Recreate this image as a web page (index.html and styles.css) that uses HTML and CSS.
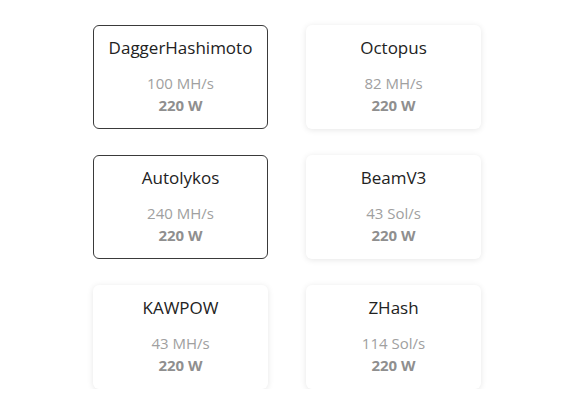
FILE: index.html
```html
<!DOCTYPE html>
<html>
<head>
<meta charset="utf-8">
<link rel="stylesheet" href="styles.css">
</head>
<body>
<div class="grid">
  <div class="card selected">
    <div class="name">DaggerHashimoto</div>
    <div class="rate">100 MH/s</div>
    <div class="power">220 W</div>
  </div>
  <div class="card">
    <div class="name">Octopus</div>
    <div class="rate">82 MH/s</div>
    <div class="power">220 W</div>
  </div>
  <div class="card selected">
    <div class="name">Autolykos</div>
    <div class="rate">240 MH/s</div>
    <div class="power">220 W</div>
  </div>
  <div class="card">
    <div class="name">BeamV3</div>
    <div class="rate">43 Sol/s</div>
    <div class="power">220 W</div>
  </div>
  <div class="card">
    <div class="name">KAWPOW</div>
    <div class="rate">43 MH/s</div>
    <div class="power">220 W</div>
  </div>
  <div class="card">
    <div class="name">ZHash</div>
    <div class="rate">114 Sol/s</div>
    <div class="power">220 W</div>
  </div>
</div>
</body>
</html>
```

FILE: styles.css
```css
html, body {
  margin: 0;
  padding: 0;
  background: #fff;
}
body {
  font-family: "Open Sans", "Noto Sans", sans-serif;
}
.grid {
  display: grid;
  grid-template-columns: 175px 175px;
  grid-auto-rows: 104px;
  column-gap: 38px;
  row-gap: 26px;
  padding: 25px 0 0 93px;
}
.card {
  box-sizing: border-box;
  border-radius: 6px;
  background: #fff;
  border: 1px solid transparent;
  box-shadow: 0 1px 6px rgba(0, 0, 0, 0.1);
  display: flex;
  flex-direction: column;
  align-items: center;
  padding-top: 10px;
}
.card.selected {
  border-color: #3a3a3a;
  box-shadow: none;
}
.name {
  font-size: 17px;
  color: #222;
  line-height: 24px;
}
.rate {
  margin-top: 12px;
  font-size: 15px;
  color: #a0a0a0;
  line-height: 22px;
}
.power {
  font-size: 15px;
  font-weight: 700;
  color: #8f8f8f;
  line-height: 22px;
}
```
